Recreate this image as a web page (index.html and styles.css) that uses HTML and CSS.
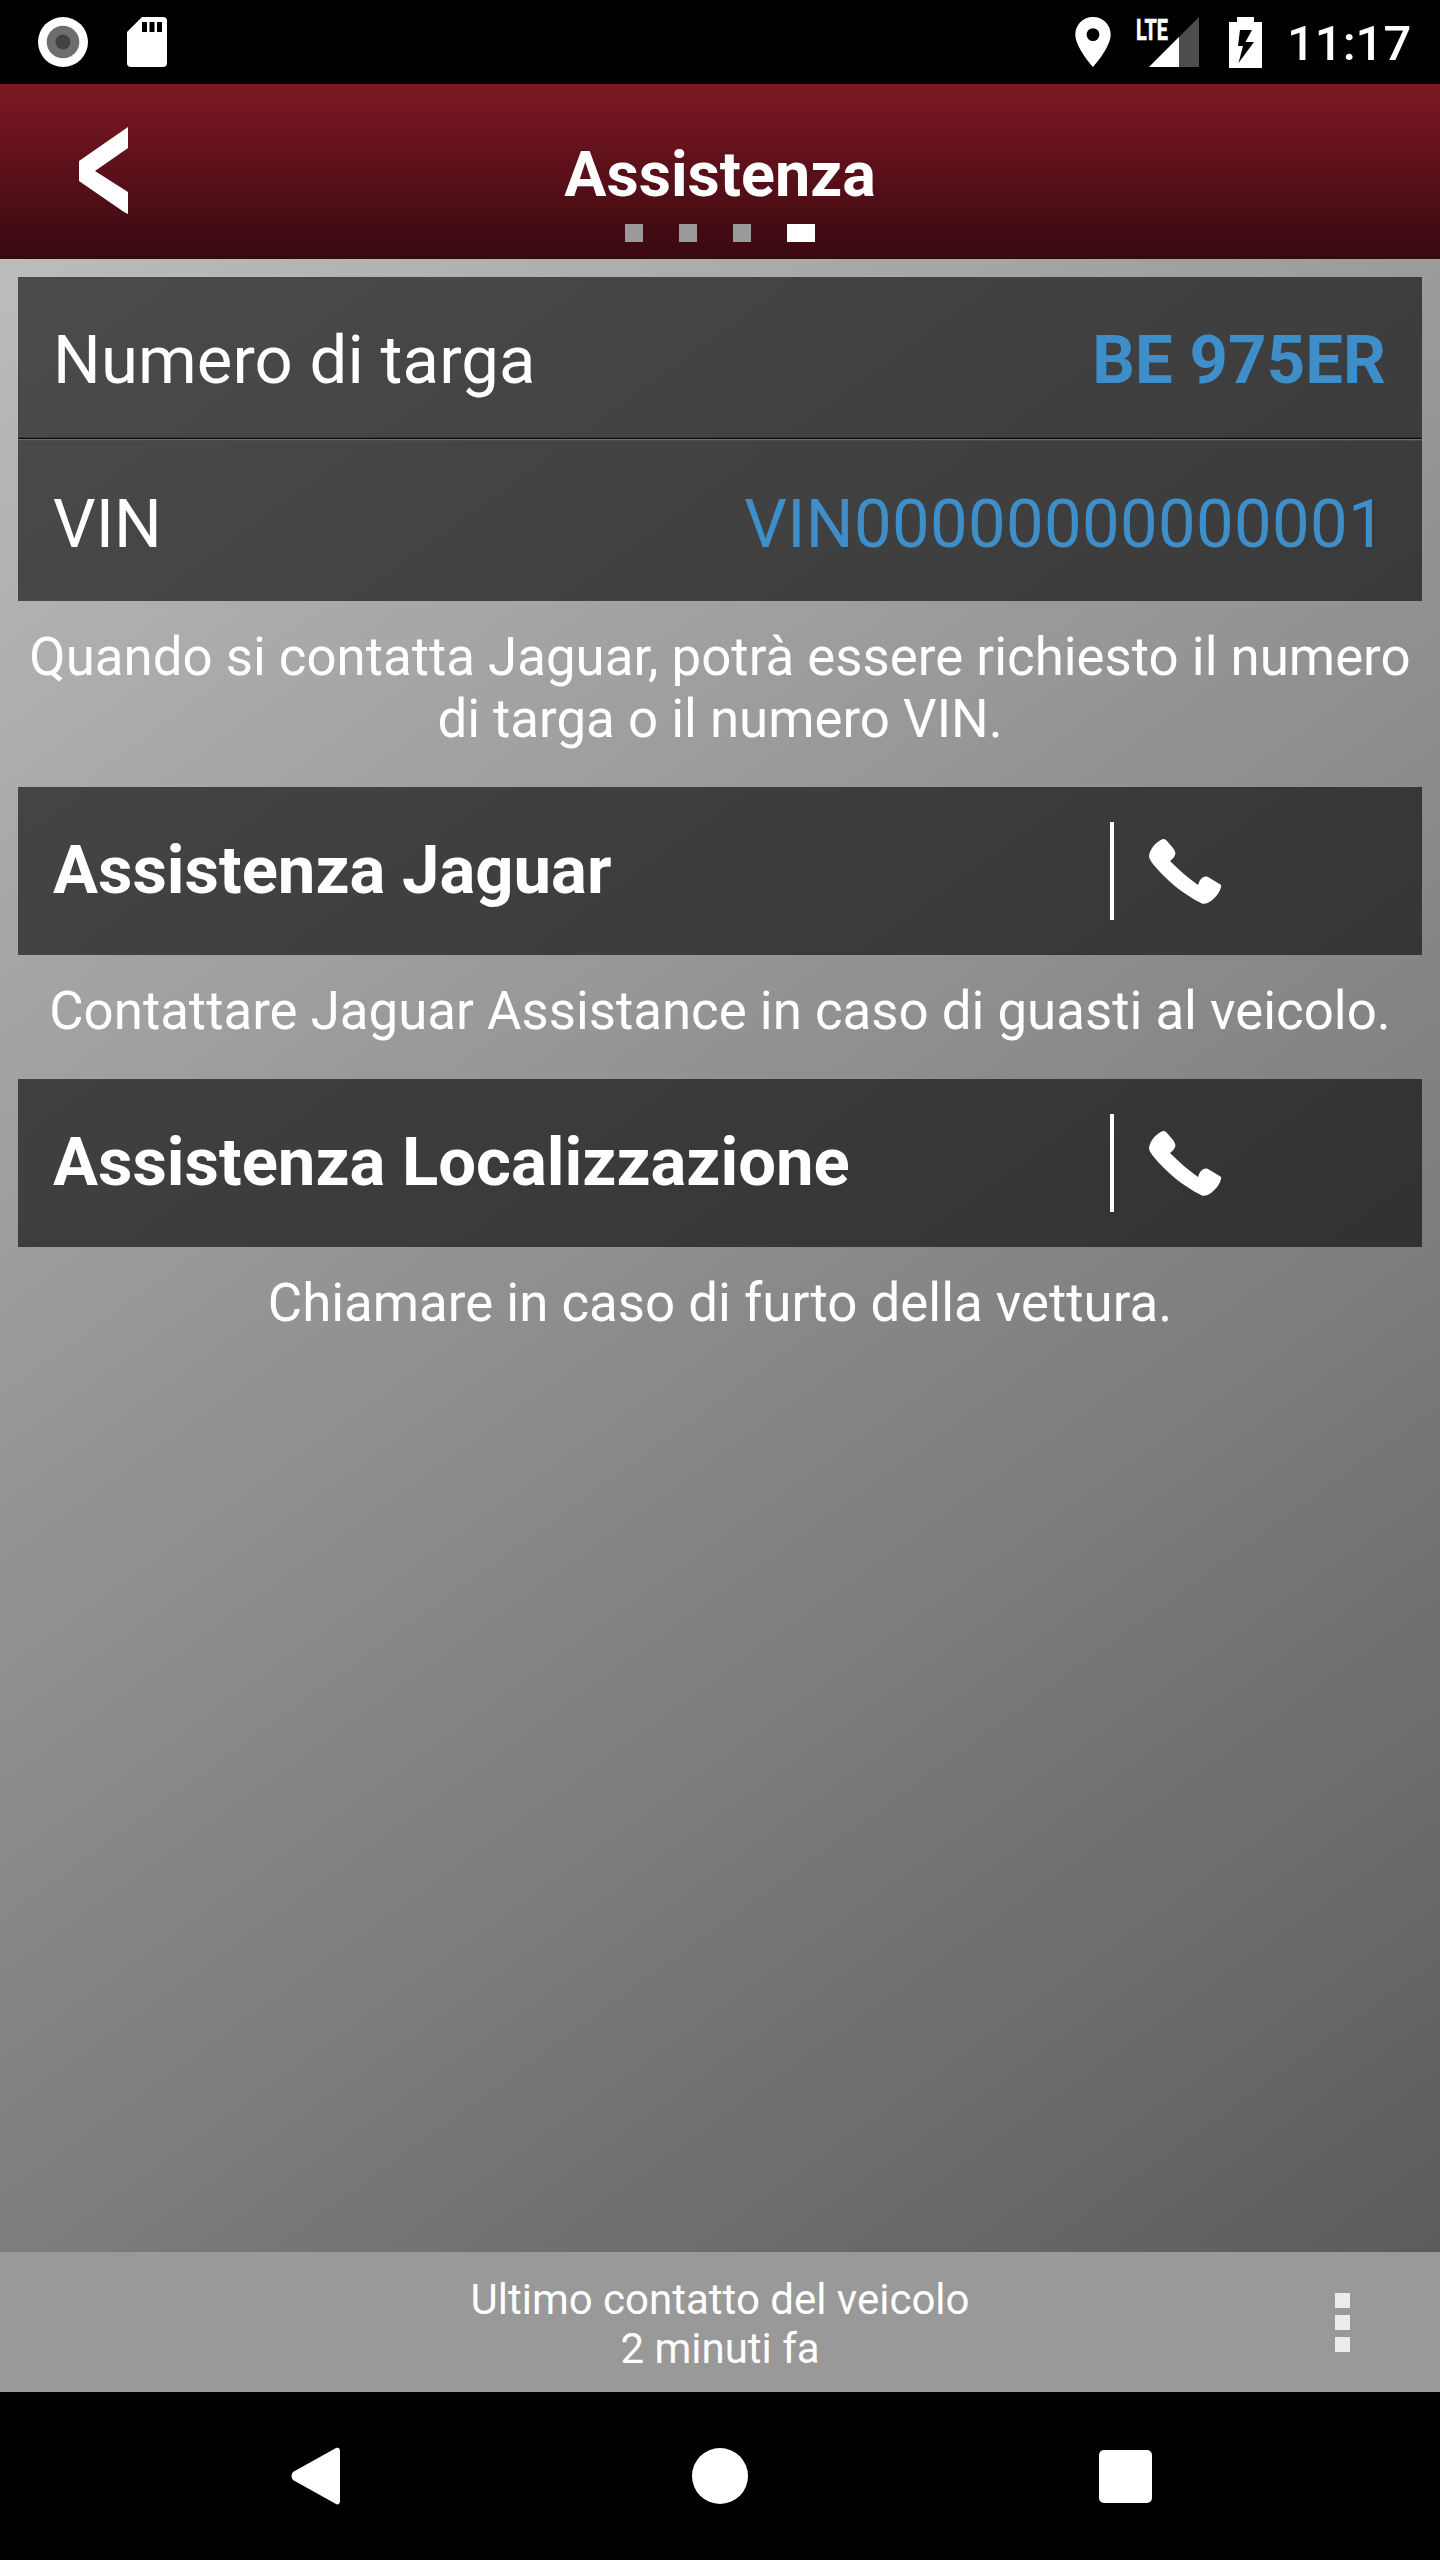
FILE: index.html
```html
<!DOCTYPE html>
<html lang="it">

  <head>
    <meta charset="UTF-8">
    <meta name="viewport" content="width=device-width, initial-scale=1.0">
    <title>Assistenza</title>
    <link rel="stylesheet" href="styles.css">
  </head>

  <body>

    <div class="status-bar">
      <div class="status-left">
        <svg width="50" height="50" viewBox="0 0 50 50">
          <circle cx="25" cy="25" r="25" fill="#fff"/>
          <circle cx="25" cy="25" r="16.3" fill="#6e6e6e"/>
          <circle cx="25" cy="25" r="7.6" fill="#424242"/>
        </svg>
        <svg width="40" height="50" viewBox="0 0 40 50">
          <path d="M15 0H36a4 4 0 0 1 4 4V46a4 4 0 0 1-4 4H4a4 4 0 0 1-4-4V15Z" fill="#fff"/>
          <path d="M15 5h5v10h-5zM22.5 5h5v10h-5zM30 5h5v10h-5z" fill="#000"/>
        </svg>
      </div>
      <div class="status-right">
        <svg class="location" width="36" height="50" viewBox="0 0 36 50">
          <path fill="#fff" fill-rule="evenodd" d="M18 0C8 0 .3 7.8 .3 17.5C.3 30.5 18 50 18 50S35.7 30.5 35.7 17.5C35.7 7.8 28 0 18 0ZM18 24a6.4 6.4 0 1 1 0-12.8a6.4 6.4 0 0 1 0 12.8Z"/>
        </svg>
        <svg class="signal" width="63" height="66" viewBox="0 -8 63 66">
          <path d="M63 0V50H13Z" fill="#4d4d4d"/>
          <path d="M43 20V50H13Z" fill="#fff"/>
          <text x="0" y="22.5" textLength="32" lengthAdjust="spacingAndGlyphs">LTE</text>
        </svg>
        <svg class="battery" width="33" height="51" viewBox="0 0 33 51">
          <path d="M8 0H25V5H33V51H0V5H8Z" fill="#fff"/>
          <path d="M11 13H23L16.500 25H25L9.500 46L14 29H9Z" fill="#000"/>
        </svg>
        <span class="clock">11:17</span>
      </div>
    </div>

    <header>
      <button class="back-btn" aria-label="Indietro">
        <svg width="50" height="90" viewBox="0 0 50 90">
          <path d="M50 0V21L17 44L50 65V87L46 85L1 54V34Z" fill="#fff"/>
        </svg>
      </button>
      <div class="header-center">
        <h1>Assistenza</h1>
        <div class="pager">
          <span></span>
          <span></span>
          <span></span>
          <span class="active"></span>
        </div>
      </div>
    </header>

    <main>
      <div class="card">
        <div class="row">
          <span>Numero di targa</span>
          <span class="value bold">BE 975ER</span>
        </div>
        <div class="divider"></div>
        <div class="row">
          <span>VIN</span>
          <span class="value vin">VIN00000000000001</span>
        </div>
      </div>
      <p class="caption">Quando si contatta Jaguar, potrà essere richiesto il numero<br>di targa o il numero VIN.</p>

      <div class="card call">
        <h2>Assistenza Jaguar</h2>
        <button class="call-btn" aria-label="Chiama">
          <svg width="73" height="67" viewBox="0 0 73 67">
            <path d="M14 1C8 3 1 10 0 18C0 21 2 23 4 26C17 42 34 56 52 65C55 67 59 65 62 63C67 59 71 54 72 49C73 47 71 46 69 45L59 39C56 38 54 39 52 41C50 43 50 45 49 47C39 40 30 32 21 23C23 21 25 20 26 17C27 15 26 13 24 10L18 3C16 1 15 1 14 1Z" fill="#fff"/>
          </svg>
        </button>
      </div>
      <p class="caption">Contattare Jaguar Assistance in caso di guasti al veicolo.</p>

      <div class="card call">
        <h2>Assistenza Localizzazione</h2>
        <button class="call-btn" aria-label="Chiama">
          <svg width="73" height="67" viewBox="0 0 73 67">
            <path d="M14 1C8 3 1 10 0 18C0 21 2 23 4 26C17 42 34 56 52 65C55 67 59 65 62 63C67 59 71 54 72 49C73 47 71 46 69 45L59 39C56 38 54 39 52 41C50 43 50 45 49 47C39 40 30 32 21 23C23 21 25 20 26 17C27 15 26 13 24 10L18 3C16 1 15 1 14 1Z" fill="#fff"/>
          </svg>
        </button>
      </div>
      <p class="caption">Chiamare in caso di furto della vettura.</p>
    </main>

    <footer>
      <p>Ultimo contatto del veicolo<br>2 minuti fa</p>
      <button class="menu-btn" aria-label="Menu">
        <span></span>
        <span></span>
        <span></span>
      </button>
    </footer>

    <nav>
      <svg width="50" height="58" viewBox="0 0 50 58">
        <path d="M45 1C47 0 49 1 49 4V54C49 57 47 58 45 57L2 33Q-1 29 2 25Z" fill="#fff"/>
      </svg>
      <svg width="57" height="57" viewBox="0 0 57 57">
        <circle cx="28" cy="28" r="28" fill="#fff"/>
      </svg>
      <svg width="53" height="53" viewBox="0 0 53 53">
        <rect width="53" height="53" rx="5" fill="#fff"/>
      </svg>
    </nav>

  </body>

</html>
```

FILE: styles.css
```css
* {
  box-sizing: border-box;
}

body {
  font-family: Roboto, sans-serif;
  margin: 0;
  height: 2560px;
  display: flex;
  flex-direction: column;
  color: white;
  background: black;
}

h1, h2, p {
  margin: 0;
}

svg {
  display: block;
}

button {
  padding: 0;
  border: none;
  background: none;
}

/* Status bar */
.status-bar {
  height: 84px;
  padding: 0 30px 0 38px;
  display: flex;
  justify-content: space-between;
  align-items: center;
}

.status-left {
  display: flex;
  gap: 39px;
}

.status-right {
  display: flex;
  align-items: center;
}

.signal {
  margin-left: 25px;
}

.signal text {
  font-size: 30px;
  font-weight: bold;
  fill: white;
  stroke: white;
  stroke-width: 0.6px;
}

.battery {
  margin-left: 30px;
}

.clock {
  width: 123px;
  margin-left: 25px;
  padding-top: 3px;
  font-size: 49px;
  font-weight: 500;
}

/* Header */
header {
  height: 175px;
  display: grid;
  grid-template-columns: 200px 1fr 200px;
  background: linear-gradient(#7d1822, #380810);
}

.back-btn {
  padding: 43px 0 0 78px;
  justify-self: start;
  align-self: start;
}

.header-center {
  display: flex;
  flex-direction: column;
  align-items: center;
}

h1 {
  margin-top: 54px;
  font-size: 62.8px;
  line-height: 74px;
}

.pager {
  display: flex;
  gap: 36px;
  margin-top: 12px;
}

.pager span {
  width: 18px;
  height: 18px;
  background: #999;
}

.pager .active {
  width: 28px;
  background: white;
}

/* Content */
main {
  height: 1993px;
  padding: 18px;
  background: linear-gradient(144.15deg, #bcbcbc, #5c5c5c);
}

.card {
  background: rgba(0, 0, 0, 0.6);
}

.row {
  height: 160px;
  padding: 6px 36px 0 35px;
  display: flex;
  justify-content: space-between;
  align-items: center;
  font-size: 67px;
  letter-spacing: 0.1px;
}

.value {
  color: #3e8ec9;
}

.vin {
  letter-spacing: 0.35px;
}

.bold {
  font-weight: bold;
}

.divider {
  height: 4px;
  background: linear-gradient(rgba(0, 0, 0, 0.2) 1px, #0a0a0a 1px 2px, #6c6c6c 2px 3px, #4c4c4c 3px);
}

.caption {
  padding: 25px 0 37px;
  font-size: 52.8px;
  line-height: 62px;
  text-align: center;
  white-space: nowrap;
}

.call {
  height: 168px;
  padding-left: 35px;
  display: flex;
  justify-content: space-between;
  align-items: center;
}

h2 {
  padding-bottom: 2px;
  font-size: 67px;
}

.call-btn {
  width: 312px;
  height: 98px;
  padding-left: 35px;
  border-left: 4px solid white;
}

/* Last contact bar */
footer {
  height: 140px;
  display: grid;
  grid-template-columns: 200px 1fr 200px;
  align-items: center;
  background: #999;
}

footer p {
  grid-column: 2;
  padding-top: 3px;
  font-size: 42px;
  line-height: 49px;
  text-align: center;
}

.menu-btn {
  display: flex;
  flex-direction: column;
  gap: 7px;
  padding-left: 95px;
}

.menu-btn span {
  width: 15px;
  height: 15px;
  background: #ececec;
}

/* Android navigation */
nav {
  height: 168px;
  padding: 0 288px 0 291px;
  display: flex;
  justify-content: space-between;
  align-items: center;
}
```
